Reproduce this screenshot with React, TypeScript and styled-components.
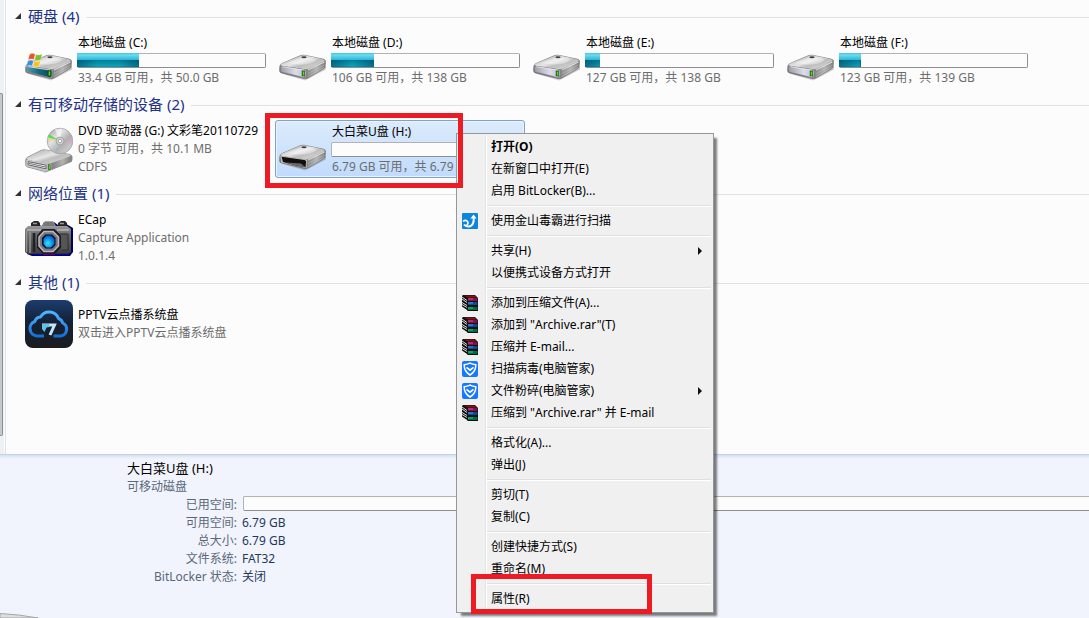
import React, { useState } from "react";
import styled, { createGlobalStyle, css } from "styled-components";

const GlobalStyle = createGlobalStyle`
  * { box-sizing: border-box; }
  body {
    margin: 0;
    background: #fcfcfc;
    font: 12px/18px "Noto Sans", "Noto Sans CJK SC", sans-serif;
    color: #000;
  }
  button { font: inherit; color: inherit; border: 0; background: none; padding: 0; text-align: left; }
  ul, dl, dd { margin: 0; padding: 0; list-style: none; }
`;

const Window = styled.div`
  position: relative;
  min-height: 100vh;
  display: flex;
  flex-direction: column;
  overflow: hidden;
`;

const Body = styled.div`
  flex: 1;
  display: flex;
`;

const NavEdge = styled.div`
  width: 6px;
  flex: none;
  display: flex;
  flex-direction: column;
  padding: 93px 0 18px;
  background: linear-gradient(to right, #f0f0f0 4px, #fcfcfc 4px);
  border-right: 1px solid #d6e5f5;
`;

const ScrollThumb = styled.div`
  flex: 1;
  width: 3px;
  background: #c8c8cc;
  border: solid #8e8f92;
  border-width: 1px 1px 1px 0;
  border-radius: 0 2px 2px 0;
`;

const Content = styled.main`
  flex: 1;
  min-width: 0;
  display: flex;
  flex-direction: column;
  gap: 1px;
  padding: 2px 0 0 9px;
`;

const GroupHeader = styled.button`
  display: flex;
  align-items: center;
  width: 100%;
  height: 30px;
  gap: 7px;
  padding-bottom: 2px;
  font-size: 15px;
  line-height: 20px;
  color: #1e3287;
  white-space: nowrap;

  &::after {
    content: "";
    flex: 1;
    height: 1px;
    margin-top: 2px;
    background: #e2e2e2;
  }
`;

const Tiles = styled.ul`
  display: grid;
  grid-template-columns: repeat(auto-fill, 250px);
  gap: 4px;
  padding-left: 6px;
`;

const Tile = styled.li<{ $selected?: boolean }>`
  position: relative;
  display: flex;
  align-items: center;
  gap: 4px;
  padding: 1px 4px 1px 3px;
  border: 1px solid transparent;
  border-radius: 3px;
  ${(p) =>
    p.$selected &&
    css`
      border-color: #7da2ce;
      background: linear-gradient(#dcebfc, #c1dbfc);
      box-shadow: inset 0 0 0 1px #ebf4fd;
    `}
`;

const TileText = styled.div`
  flex: 1;
  min-width: 0;
`;

const Line = styled.div<{ $muted?: boolean }>`
  padding-left: 1px;
  white-space: nowrap;
  overflow: hidden;
  color: ${(p) => (p.$muted ? "#6d6d6d" : "#000")};
`;

const Bar = styled.div`
  height: 15px;
  margin: 1px 0;
  border: 1px solid #b2b2b2;
  border-bottom-color: #8e8e8e;
  border-right-color: #8e8e8e;
  border-radius: 2px;
  background: #fcfcfc;
`;

const BarFill = styled.div`
  height: 14px;
  margin: -1px 0 0 -1px;
  background:
    linear-gradient(to right, rgba(0, 50, 80, 0.45), transparent 20px, transparent calc(100% - 20px), rgba(0, 50, 80, 0.45)) 0 7px / 100% 7px no-repeat,
    linear-gradient(#45c3de, #6bdcf2 2px, #2fb4d3 7px, #037d98 7px, #08a3bd 13px, #0a8ba6);
`;

const Callout = styled.div<{ $w: number; $h: number; $x: number; $y: number }>`
  position: absolute;
  z-index: 3;
  left: ${(p) => p.$x}px;
  top: ${(p) => p.$y}px;
  width: ${(p) => p.$w}px;
  height: ${(p) => p.$h}px;
  border: 5px solid #ed1c24;
  pointer-events: none;
`;

const Details = styled.section`
  position: relative;
  padding: 3px 0 32px 127px;
  border-top: 1px solid #c3d3e6;
  background: linear-gradient(#d4e1f0, #e4ecf8 2px, #f1f4fc 4px);
  color: #5a6779;
`;

const DetailsTitle = styled.div`
  font-size: 13px;
  line-height: 20px;
  color: #000;
`;

const DetailsList = styled.dl`
  display: grid;
  grid-template-columns: 110px 1fr;
  column-gap: 5px;

  dt { text-align: right; white-space: nowrap; justify-self: end; }
  dd { color: #1e395b; }
`;

const WideBar = styled(Bar)`
  margin: 0 0 3px 1px;
  border-right: 0;
  border-radius: 2px 0 0 2px;
`;

const Corner = styled.svg`
  position: absolute;
  left: 0;
  bottom: 0;
`;

const Menu = styled.div`
  position: absolute;
  z-index: 2;
  left: 456px;
  top: 133px;
  width: 258px;
  padding: 2px;
  border: 1px solid #979797;
  background: linear-gradient(to right, transparent 28px, #e2e3e3 28px, #e2e3e3 29px, #fff 29px, #fff 30px, transparent 30px) 0 2px / 100% calc(100% - 4px) no-repeat #f0f0f0;
  box-shadow: 4px 4px 2px -1px rgba(0, 0, 0, 0.5);
`;

const MenuItem = styled.button<{ $bold?: boolean }>`
  position: relative;
  display: flex;
  align-items: center;
  gap: 13px;
  width: 100%;
  height: 22px;
  padding: 0 9px 0 3px;
  white-space: nowrap;
  font-weight: ${(p) => (p.$bold ? 700 : 400)};
`;

const IconSlot = styled.span`
  width: 16px;
  height: 16px;
  flex: none;
  svg { display: block; }
`;

const MenuLabel = styled.span`
  flex: 1;
`;

const Separator = styled.div`
  height: 2px;
  margin: 3px 0 3px 28px;
  border-top: 1px solid #e0e0e0;
  background: #fff;
`;

const SharedPaints = styled.svg`
  position: absolute;
`;

type DriveKind = "plain" | "windows" | "removable";

function Defs() {
  return (
    <SharedPaints width="0" height="0" aria-hidden>
      <defs>
        <linearGradient id="top" x1="0" y1="0" x2="1" y2="1">
          <stop offset="0" stopColor="#a2a2a2" />
          <stop offset=".45" stopColor="#e6e6e6" />
          <stop offset=".6" stopColor="#bdbdbd" />
          <stop offset="1" stopColor="#e2e2e2" />
        </linearGradient>
        <linearGradient id="side" x1="0" y1="0" x2="1" y2="0">
          <stop offset="0" stopColor="#666" />
          <stop offset=".55" stopColor="#7c7c7c" />
          <stop offset=".8" stopColor="#b2b2b2" />
          <stop offset="1" stopColor="#7c7c7c" />
        </linearGradient>
        <linearGradient id="front" x1="0" y1="0" x2="1" y2="0">
          <stop offset="0" stopColor="#a0a0ac" />
          <stop offset=".6" stopColor="#dcdcec" />
          <stop offset="1" stopColor="#c0c0cc" />
        </linearGradient>
        <linearGradient id="teal" x1="0" y1="0" x2="1" y2="0">
          <stop offset="0" stopColor="#4f9aa8" />
          <stop offset=".5" stopColor="#15677c" />
          <stop offset="1" stopColor="#0a4a52" />
        </linearGradient>
        <linearGradient id="disc" x1="0" y1="0" x2="1" y2="1">
          <stop offset="0" stopColor="#989898" />
          <stop offset=".35" stopColor="#e4e4e4" />
          <stop offset=".6" stopColor="#b0b0b0" />
          <stop offset="1" stopColor="#dedede" />
        </linearGradient>
        <linearGradient id="body" x1="0" y1="0" x2="0" y2="1">
          <stop offset="0" stopColor="#9b9b9b" />
          <stop offset=".3" stopColor="#686868" />
          <stop offset="1" stopColor="#3e3e3e" />
        </linearGradient>
        <radialGradient id="lens" cx=".4" cy=".65" r=".7">
          <stop offset="0" stopColor="#37e6f5" />
          <stop offset=".6" stopColor="#0b8fe0" />
          <stop offset="1" stopColor="#0a4cb6" />
        </radialGradient>
        <linearGradient id="night" x1="0" y1="0" x2="0" y2="1">
          <stop offset="0" stopColor="#1b3d6e" />
          <stop offset=".45" stopColor="#152137" />
          <stop offset="1" stopColor="#1b1b1d" />
        </linearGradient>
        <linearGradient id="cloud" x1="0" y1="0" x2="0" y2="1">
          <stop offset="0" stopColor="#52b4ff" />
          <stop offset="1" stopColor="#146fd6" />
        </linearGradient>
      </defs>
    </SharedPaints>
  );
}

function DriveIcon({ kind }: { kind: DriveKind }) {
  return (
    <svg width="48" height="48" viewBox={kind === "removable" ? "0 -2 48 48" : "0 0 48 48"} aria-hidden>
      <path d="M4 37 26 43.500 47 32.500V29L26 38Z" fill="#000" opacity=".18" />
      <path d="M.8 29.500Q1 27.500 3 26.500L21 18.800Q24 17.600 27 18.500L45 22.300Q47 23 46.500 25.500L46 30Q45.800 31.200 44 32.200L29 41Q27 42 25 41.500L2.500 36Q.8 35.500.6 34Z" fill="url(#side)" stroke="#787878" strokeWidth=".7" />
      <path d="M1.500 28Q2 27 3.500 26.300L21 18.900Q24 17.800 27 18.600L44.500 22.400Q46.500 23.200 45 24.400L30 31.500Q28 32.600 25.500 32.200L3 28.900Z" fill="url(#top)" />
      <path d="M7 26.500 23 20.200Q25 19.800 27 20.300L38 23Q31 28 21 27.500 13 26 7 26.500Z" fill="#fff" opacity=".4" />
      <path d="M29 33 45.500 25" stroke="#f4f4f4" strokeWidth=".8" />
      <path d="M29 36.500 45.500 28M29 39.500 45 30.500" stroke="#cfcfcf" strokeWidth=".6" opacity=".7" />
      <ellipse cx="25" cy="20.300" rx="2.600" ry="1" fill="#444" />
      {kind === "removable" ? (
        <>
          <path d="M1.200 28.600 28 32.500 27.500 41 2 35.500Z" fill="#bcbcbc" />
          <path d="M2.600 29.800 25.500 33Q27.300 33.400 27.100 35L26.500 40.200 18 38.800 4 35Z" fill="#101010" />
          <path d="M7 35.500 22 36.500 26.500 40.300 18 38.800Z" fill="#6a6a6a" />
        </>
      ) : (
        <>
          <path d="M1.200 28.600 27.500 32.500 27 41.200 1.500 35Z" fill="#8d8d92" />
          <path d="M3.500 29.700 25 33.100Q26.800 33.500 26.700 35L26.400 39Q26 40.500 24 40L3.500 34.700Q1.900 34.200 2 32.800V31Q2.200 29.500 3.500 29.700Z" fill={kind === "windows" ? "url(#teal)" : "url(#front)"} />
          <path d="M3.500 29.700 25 33.100" stroke="#f8f8f8" strokeWidth=".7" />
          <path d="M22.800 33.400 25.800 33.800V39.600L22.800 38.900Z" fill="#143d10" />
          <path d="M23.600 34.200 25.300 34.400V38.800L23.600 38.400Z" fill="#4ade1d" />
        </>
      )}
      {kind === "windows" && (
        <g stroke="#fff" strokeWidth=".35">
          <path d="M4.500 17.500Q7 15.300 10.200 17.200L8.800 22.700Q6 21.200 3 23.100Z" fill="#ea5526" />
          <path d="M10.900 17.500Q14 18.700 17.200 17L15.800 22.700Q12.700 24.300 9.500 23.100Z" fill="#84bd2d" />
          <path d="M2.800 24Q5.500 22.300 8.600 23.800L7.200 29Q4.200 27.600 1.300 29.400Z" fill="#3a8fdc" />
          <path d="M9.300 24.100Q12.300 25.400 15.500 23.800L14.100 29.200Q11 30.800 7.900 29.500Z" fill="#fbc01f" />
        </g>
      )}
    </svg>
  );
}

function DvdIcon() {
  return (
    <svg width="48" height="48" viewBox="0 0 48 48" aria-hidden>
      <path d="M3 42 20 48 48 35V31Z" fill="#000" opacity=".15" />
      <path d="M.8 35Q.8 33.300 2.500 32.300L16 25.500Q18 24.500 21 25L45 29.500Q47 30 46.800 32L46.500 36.500 23 46Q21 46.600 19 46L2.500 42Q.8 41.500.8 40Z" fill="url(#side)" stroke="#787878" strokeWidth=".7" />
      <path d="M1.500 34Q1.500 33 3 32.200L16 25.600Q18 24.700 21 25.100L45 29.600Q46.500 30.200 45 31.300L26 38.200Q24 39 21.500 38.500L3 35Z" fill="url(#top)" />
      <path d="M1.200 34.600 26.500 39.200 26.200 45 20 46.200 1.200 41.400Z" fill="#c6c6ca" />
      <path d="M3.200 36.700 21 40.200V43.800L3.200 39.800Z" fill="#f4f4f4" stroke="#4a4a4a" strokeWidth=".8" />
      <path d="M4 38.400 20.500 42" stroke="#555" strokeWidth=".8" />
      <path d="M22.900 39.200 25.500 39.700V45L22.900 44.400Z" fill="#143d10" />
      <path d="M23.500 40 25 40.300V44.200L23.500 43.900Z" fill="#4ade1d" />
      <circle cx="35" cy="16" r="12.800" fill="url(#disc)" stroke="#9a9a9a" strokeWidth=".7" />
      <path d="M35 16 22.900 12.300 24 9.500Z" fill="#4fe04a" />
      <path d="M35 16 22.400 15.500 22.900 12.300Z" fill="#e6e06c" opacity=".6" />
      <path d="M35 16 47.400 14 47.400 17.500Z" fill="#d8a0c0" opacity=".6" />
      <path d="M35 16 27 26 29.500 27.500Z" fill="#a6ccd8" opacity=".6" />
      <path d="M35 16 30 4.500 37 3.500Z" fill="#fff" opacity=".6" />
      <circle cx="35" cy="16" r="4" fill="#cecece" stroke="#989898" strokeWidth=".7" />
      <circle cx="35" cy="16" r="1.700" fill="#fff" stroke="#888" strokeWidth=".6" />
    </svg>
  );
}

function CameraIcon() {
  return (
    <svg width="48" height="48" viewBox="0 0 48 48" aria-hidden>
      <path d="M4 14 8 9 17 12 19 8H29L33 11 38 8 43 11 48 14V38L45 42H7L2 40Z" fill="#03035e" />
      <path d="M6 12V9L9 7H13L15 9V12ZM33 12V9L36 7H40L42 9V12Z" fill="#262626" />
      <path d="M8 9.500H12M35 9.500H39" stroke="#999" strokeWidth="1.500" />
      <path d="M17 13 20 7.500H28L31 13Z" fill="#777" stroke="#9d9d9d" strokeWidth=".8" />
      <path d="M0 15 3 12H42L46 15V38L43 40H3L0 38Z" fill="url(#body)" />
      <path d="M2 16H16M32 16H44" stroke="#b5b5b5" strokeWidth="1.500" />
      <path d="M1.500 17V38M5 18V39" stroke="#929292" strokeWidth="1.500" />
      <path d="M9 19V38" stroke="#222" strokeWidth="2.500" />
      <path d="M35 20H43V36H37" fill="#555" stroke="#303030" />
      <path d="M17.500 15H29.500L36 21.500V33.500L30 40H18L12 33.500V21.500Z" fill="#1c1c2a" />
      <path d="M19 17.500H28L33.500 23V32L28 37.500H19L14 32V23Z" fill="#777" stroke="#bababa" strokeWidth="1.500" />
      <path d="M20.500 20.500H27L30.500 24V31L27 34.500H20.500L17 31V24Z" fill="#09093f" />
      <path d="M21.500 21.500H26L29.500 25V30L26 33.500H21.500L18.500 30V25Z" fill="url(#lens)" />
      <path d="M7 40.500H17M31 40.500H44" stroke="#0707a0" strokeWidth="1.500" />
      <path d="M18 40.500H30" stroke="#5f0070" strokeWidth="1.500" />
    </svg>
  );
}

function PptvIcon() {
  return (
    <svg width="48" height="48" viewBox="0 0 48 48" aria-hidden>
      <rect width="48" height="48" rx="8" fill="url(#night)" />
      <path d="M19 36H12.500A7.500 7.500 0 0 1 9.800 21.500 6.500 6.500 0 0 1 15.500 17 10 10 0 0 1 33.500 18.500 7 7 0 0 1 37.700 23 6.900 6.900 0 0 1 36 36H28.500" fill="none" stroke="url(#cloud)" strokeWidth="3" strokeLinejoin="round" />
      <path d="M17 25H29.500L25 35" fill="none" stroke="#bfe9f7" strokeWidth="3" />
      <path d="M17 24V29L19.500 32 21.500 27.500 24.500 27 24 24Z" fill="#62c1ec" />
    </svg>
  );
}

function KingsoftIcon() {
  return (
    <svg width="16" height="16" viewBox="0 0 16 16" aria-hidden>
      <rect width="16" height="16" rx="1" fill="#0c85dc" />
      <path d="M1 8.300Q3.500 6.300 5.300 8.300T4.500 12.600" fill="none" stroke="#fff" strokeWidth="1.600" />
      <path d="M2 11.500Q4 14.300 8 13.300 12.300 11.500 11.700 4.500" fill="none" stroke="#fff" strokeWidth="2" />
      <path d="M8.500 5.600 11.500 1.500 14.600 5.600Z" fill="#fff" />
    </svg>
  );
}

function RarIcon() {
  const spines = [
    { y: 3, dark: "#7c1050", light: "#e04a98" },
    { y: 7, dark: "#0b4a94", light: "#48a4e8" },
    { y: 12, dark: "#056a44", light: "#30cc90" },
  ];
  return (
    <svg width="16" height="16" viewBox="0 0 16 16" aria-hidden>
      <path d="M1 0H13L16 3V16H6L0 12V1Z" fill="#111" />
      <path d="M2 .5H12.500L15 2.500H6Z" fill="#861218" />
      <path d="M0 2 5 5.500M0 4 5 7.500M0 7.500 5 10.500M0 9.500 5 12.500M0 12 5 15.500" stroke="#f4f4f4" strokeWidth=".9" />
      {spines.map((s) => (
        <g key={s.y}>
          <path d={`M6 ${s.y}H15.500V${s.y + 3}H6Z`} fill={s.dark} />
          <path d={`M6 ${s.y + 1}H11`} stroke={s.light} strokeWidth="1" />
        </g>
      ))}
    </svg>
  );
}

function GuardIcon() {
  return (
    <svg width="16" height="16" viewBox="0 0 16 16" aria-hidden>
      <rect width="16" height="16" rx="2" fill="#1677ff" />
      <path d="M2.200 3.800Q5.500 3.500 8 2.200 10.500 3.500 13.800 3.800 14 10.500 8 14 2 10.500 2.200 3.800Z" fill="none" stroke="#fff" strokeWidth="1.500" />
      <path d="M4.500 6.300 8 9.200 11.500 6.300" fill="none" stroke="#fff" strokeWidth="1.700" />
    </svg>
  );
}

const SubmenuArrow = () => (
  <svg width="4" height="8" viewBox="0 0 4 8" aria-hidden>
    <path d="M0 0 4 4 0 8Z" fill="#111" />
  </svg>
);

const Meter = ({ label, percent }: { label: string; percent: number }) => (
  <Bar role="meter" aria-label={label} aria-valuenow={percent} aria-valuemin={0} aria-valuemax={100}>
    {percent > 0 && <BarFill style={{ width: `${percent}%` }} />}
  </Bar>
);

function Group({ title, children }: { title: string; children: React.ReactNode }) {
  const [open, setOpen] = useState(true);
  return (
    <section>
      <GroupHeader aria-expanded={open} onClick={() => setOpen(!open)}>
        <svg width="6" height="6" viewBox="0 0 6 6" aria-hidden>
          <path d="M6 0V6H0Z" fill="#333" />
        </svg>
        {title}
      </GroupHeader>
      {open && <Tiles>{children}</Tiles>}
    </section>
  );
}

const disks: { name: string; info: string; percent: number; kind: DriveKind }[] = [
  { name: "本地磁盘 (C:)", info: "33.4 GB 可用，共 50.0 GB", percent: 33, kind: "windows" },
  { name: "本地磁盘 (D:)", info: "106 GB 可用，共 138 GB", percent: 23, kind: "plain" },
  { name: "本地磁盘 (E:)", info: "127 GB 可用，共 138 GB", percent: 8, kind: "plain" },
  { name: "本地磁盘 (F:)", info: "123 GB 可用，共 139 GB", percent: 12, kind: "plain" },
];

type Entry = { label: string; icon?: React.ReactNode; bold?: boolean; submenu?: boolean; marked?: boolean };

const menuSections: Entry[][] = [
  [{ label: "打开(O)", bold: true }, { label: "在新窗口中打开(E)" }, { label: "启用 BitLocker(B)..." }],
  [{ label: "使用金山毒霸进行扫描", icon: <KingsoftIcon /> }],
  [{ label: "共享(H)", submenu: true }, { label: "以便携式设备方式打开" }],
  [
    { label: "添加到压缩文件(A)...", icon: <RarIcon /> },
    { label: '添加到 "Archive.rar"(T)', icon: <RarIcon /> },
    { label: "压缩并 E-mail...", icon: <RarIcon /> },
    { label: "扫描病毒(电脑管家)", icon: <GuardIcon /> },
    { label: "文件粉碎(电脑管家)", icon: <GuardIcon />, submenu: true },
    { label: '压缩到 "Archive.rar" 并 E-mail', icon: <RarIcon /> },
  ],
  [{ label: "格式化(A)..." }, { label: "弹出(J)" }],
  [{ label: "剪切(T)" }, { label: "复制(C)" }],
  [{ label: "创建快捷方式(S)" }, { label: "重命名(M)" }],
  [{ label: "属性(R)", marked: true }],
];

export default function App() {
  return (
    <Window>
      <GlobalStyle />
      <Defs />
      <Body>
        <NavEdge>
          <ScrollThumb />
        </NavEdge>
        <Content>
          <Group title="硬盘 (4)">
            {disks.map((d) => (
              <Tile key={d.name}>
                <DriveIcon kind={d.kind} />
                <TileText>
                  <Line>{d.name}</Line>
                  <Meter label={d.name} percent={d.percent} />
                  <Line $muted>{d.info}</Line>
                </TileText>
              </Tile>
            ))}
          </Group>
          <Group title="有可移动存储的设备 (2)">
            <Tile>
              <DvdIcon />
              <TileText>
                <Line>DVD 驱动器 (G:) 文彩笔20110729</Line>
                <Line $muted>0 字节 可用，共 10.1 MB</Line>
                <Line $muted>CDFS</Line>
              </TileText>
            </Tile>
            <Tile $selected>
              <DriveIcon kind="removable" />
              <TileText>
                <Line>大白菜U盘 (H:)</Line>
                <Meter label="大白菜U盘 (H:)" percent={0} />
                <Line $muted>6.79 GB 可用，共 6.79 GB</Line>
              </TileText>
              <Callout $x={-11} $y={-8} $w={198} $h={75} />
            </Tile>
          </Group>
          <Group title="网络位置 (1)">
            <Tile>
              <CameraIcon />
              <TileText>
                <Line>ECap</Line>
                <Line $muted>Capture Application</Line>
                <Line $muted>1.0.1.4</Line>
              </TileText>
            </Tile>
          </Group>
          <Group title="其他 (1)">
            <Tile>
              <PptvIcon />
              <TileText>
                <Line>PPTV云点播系统盘</Line>
                <Line $muted>双击进入PPTV云点播系统盘</Line>
              </TileText>
            </Tile>
          </Group>
        </Content>
      </Body>
      <Details>
        <DetailsTitle>大白菜U盘 (H:)</DetailsTitle>
        <div>可移动磁盘</div>
        <DetailsList>
          <dt>已用空间:</dt>
          <dd>
            <WideBar role="meter" aria-label="已用空间" aria-valuenow={0} />
          </dd>
          <dt>可用空间:</dt>
          <dd>6.79 GB</dd>
          <dt>总大小:</dt>
          <dd>6.79 GB</dd>
          <dt>文件系统:</dt>
          <dd>FAT32</dd>
          <dt>BitLocker 状态:</dt>
          <dd>关闭</dd>
        </DetailsList>
        <Corner width="38" height="5" viewBox="0 0 38 5" aria-hidden>
          <path d="M0 .5Q20 1.500 38 5H0Z" fill="#dedede" stroke="#a5a5a5" />
        </Corner>
      </Details>
      <Menu role="menu">
        {menuSections.map((section, i) => (
          <React.Fragment key={i}>
            {i > 0 && <Separator role="separator" />}
            {section.map((item) => (
              <MenuItem key={item.label} role="menuitem" $bold={item.bold}>
                <IconSlot>{item.icon}</IconSlot>
                <MenuLabel>{item.label}</MenuLabel>
                {item.submenu && <SubmenuArrow />}
                {item.marked && <Callout $x={12} $y={-14} $w={181} $h={40} />}
              </MenuItem>
            ))}
          </React.Fragment>
        ))}
      </Menu>
    </Window>
  );
}
